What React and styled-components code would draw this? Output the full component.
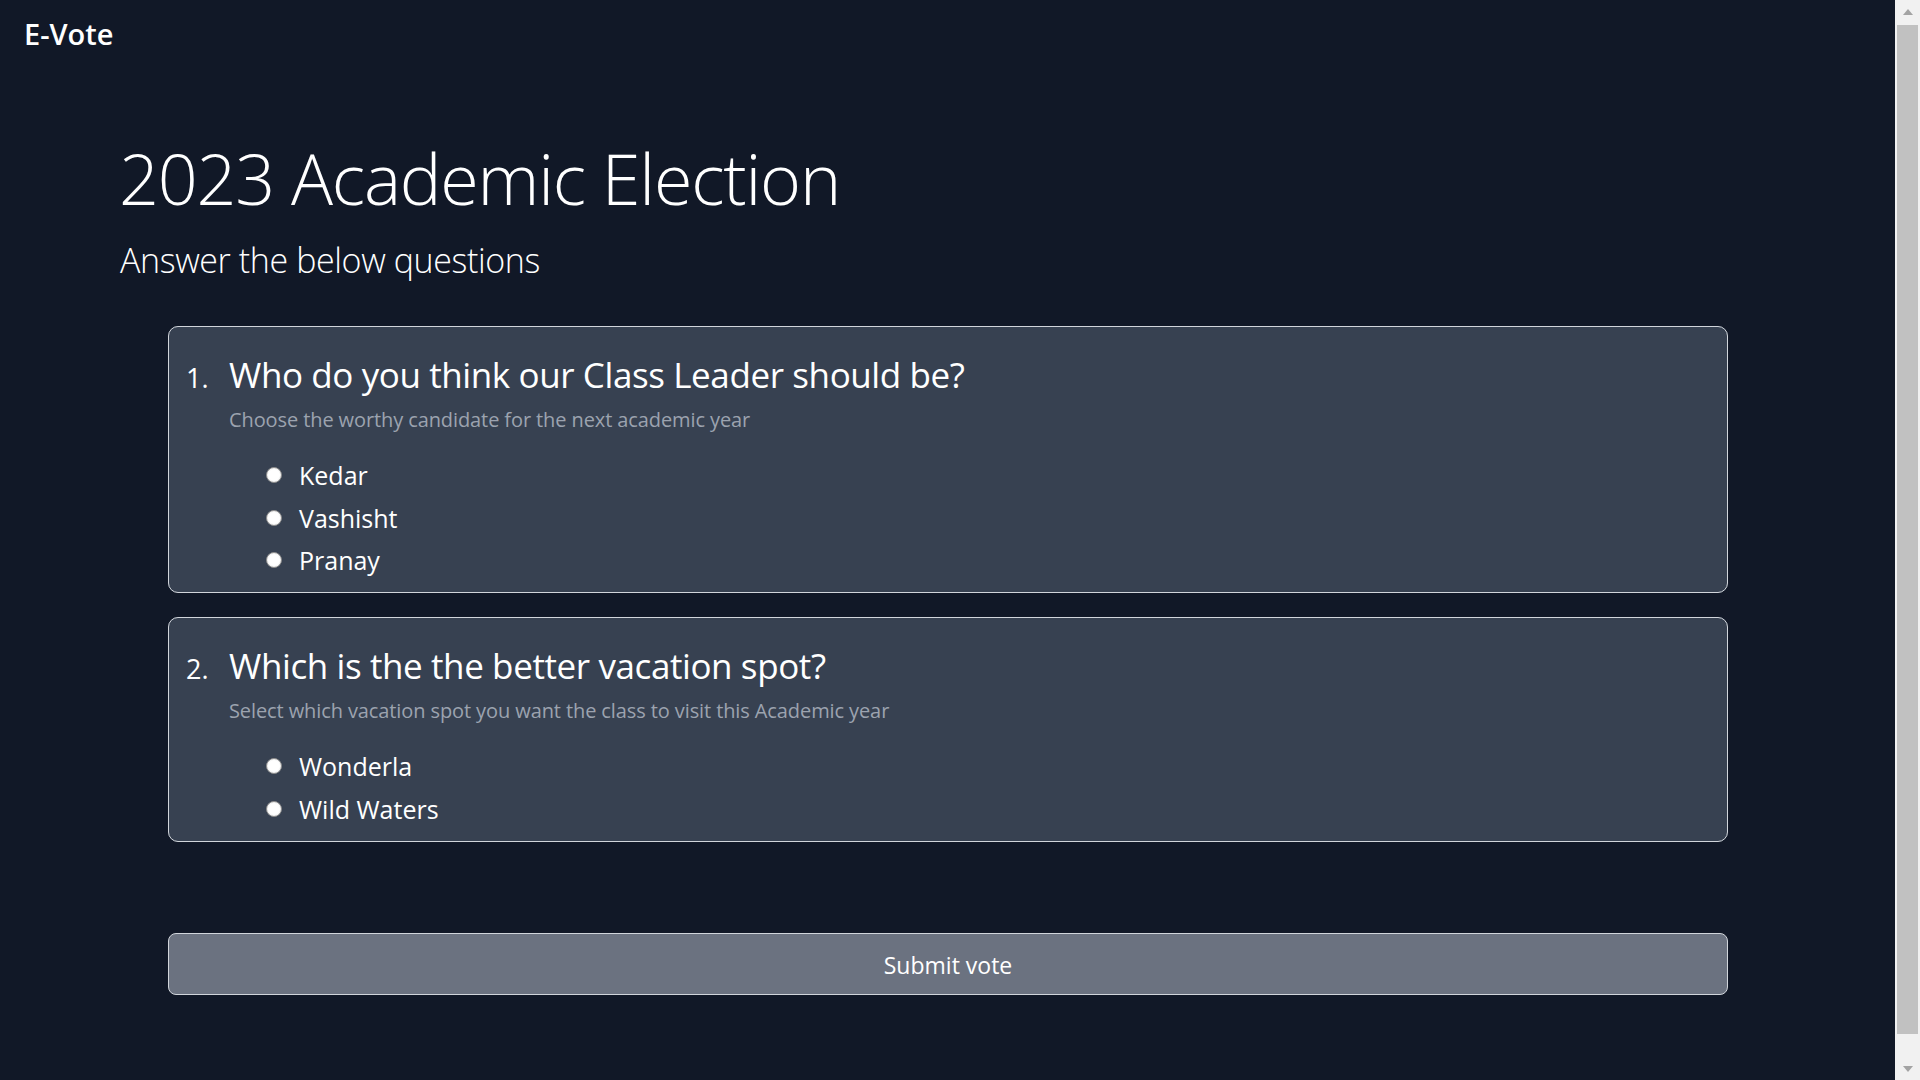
import React from "react";
import styled, { createGlobalStyle } from "styled-components";

const GlobalStyle = createGlobalStyle`
  html, body {
    margin: 0;
    padding: 0;
    overflow: hidden;
    background: #111827;
  }
  body {
    color: #ffffff;
    font-family: "Open Sans", "Noto Sans", sans-serif;
  }
  * { box-sizing: border-box; }
`;

const Window = styled.div`
  display: flex;
  height: 100vh;
`;

const Viewport = styled.main`
  flex: 1;
  min-width: 0;
  display: flex;
  flex-direction: column;
  overflow: hidden;
`;

/* browser scrollbar, drawn */
const ScrollBar = styled.div`
  width: 25px;
  flex: none;
  display: flex;
  flex-direction: column;
  background: #f1f1f1;
`;

const ScrollButton = styled.div`
  height: 25px;
  flex: none;
  display: flex;
  align-items: center;
  justify-content: center;

  &::before {
    content: "";
    width: 0;
    height: 0;
    border-left: 5.5px solid transparent;
    border-right: 5.5px solid transparent;
    ${(p) =>
      p.$down
        ? "border-top: 6px solid #a3a3a3; margin-top: 2px;"
        : "border-bottom: 6px solid #a3a3a3; margin-bottom: 2px;"}
  }
`;

const Track = styled.div`
  flex: 1;
  padding: 0 2px;
`;

const Thumb = styled.div`
  height: 1009px;
  background: #c1c1c1;
`;

const Header = styled.header`
  display: flex;
  align-items: center;
  padding: 16px 24px 0;
  height: 52px;
`;

const Brand = styled.div`
  font-size: 29px;
  font-weight: 600;
  line-height: 36px;
`;

const Hero = styled.section`
  display: flex;
  flex-direction: column;
  padding-left: 119px;
  margin-top: 90px;
`;

const Title = styled.h1`
  margin: 0;
  font-size: 70px;
  font-weight: 300;
  line-height: 72px;
  letter-spacing: -1.2px;
`;

const Subtitle = styled.h2`
  margin: 26px 0 0 1px;
  font-size: 34px;
  font-weight: 300;
  line-height: 40px;
  letter-spacing: -0.4px;
`;

const Form = styled.form`
  display: flex;
  flex-direction: column;
  gap: 24px;
  padding: 0 167px 0 168px;
  margin-top: 46px;
`;

const Card = styled.fieldset`
  margin: 0;
  min-width: 0;
  display: flex;
  flex-direction: column;
  background: #374151;
  border: 1px solid #d1d5db;
  border-radius: 10px;
  padding: 28px 17px 16px;
`;

const QuestionRow = styled.div`
  display: flex;
  align-items: baseline;
`;

const Number = styled.span`
  width: 43px;
  flex: none;
  font-size: 27px;
  line-height: 40px;
`;

const Question = styled.h3`
  margin: 0;
  font-size: 35px;
  font-weight: 400;
  line-height: 40px;
  letter-spacing: -0.4px;
`;

const Hint = styled.p`
  margin: 8px 0 0 43px;
  font-size: 20px;
  line-height: 28px;
  color: #9ca3af;
  letter-spacing: -0.1px;
`;

const Options = styled.div`
  display: flex;
  flex-direction: column;
  gap: 10.5px;
  margin-top: 25px;
  padding-left: 80px;
`;

const Option = styled.label`
  display: flex;
  align-items: center;
  gap: 17px;
  height: 32px;
  font-size: 25px;
  line-height: 32px;
  cursor: pointer;
`;

const Radio = styled.input.attrs({ type: "radio" })`
  appearance: none;
  margin: 0;
  width: 16px;
  height: 16px;
  flex: none;
  border-radius: 50%;
  background: #ffffff;
  border: 1px solid #8a8a8a;
  box-shadow: inset 0 0 0 1px #f3f3f3;

  &:checked {
    border: 4px solid #0075ff;
    box-shadow: none;
  }
`;

const Submit = styled.button`
  margin: 91px 167px 0 168px;
  height: 62px;
  flex: none;
  border: 1px solid #d1d5db;
  border-radius: 8px;
  background: #6b7280;
  color: #ffffff;
  font-family: inherit;
  font-size: 23px;
  line-height: 60px;
  cursor: pointer;
`;

const questions = [
  {
    name: "leader",
    title: "Who do you think our Class Leader should be?",
    hint: "Choose the worthy candidate for the next academic year",
    options: ["Kedar", "Vashisht", "Pranay"],
  },
  {
    name: "vacation",
    title: "Which is the the better vacation spot?",
    hint: "Select which vacation spot you want the class to visit this Academic year",
    options: ["Wonderla", "Wild Waters"],
  },
];

export default function App() {
  return (
    <Window>
      <GlobalStyle />
      <Viewport>
        <Header>
          <Brand>E-Vote</Brand>
        </Header>
        <Hero>
          <Title>2023 Academic Election</Title>
          <Subtitle>Answer the below questions</Subtitle>
        </Hero>
        <Form onSubmit={(e) => e.preventDefault()}>
          {questions.map((q, i) => (
            <Card key={q.name}>
              <QuestionRow>
                <Number>{i + 1}.</Number>
                <Question>{q.title}</Question>
              </QuestionRow>
              <Hint>{q.hint}</Hint>
              <Options>
                {q.options.map((opt) => (
                  <Option key={opt}>
                    <Radio name={q.name} value={opt} />
                    {opt}
                  </Option>
                ))}
              </Options>
            </Card>
          ))}
        </Form>
        <Submit type="button">Submit vote</Submit>
      </Viewport>
      <ScrollBar>
        <ScrollButton />
        <Track>
          <Thumb />
        </Track>
        <ScrollButton $down />
      </ScrollBar>
    </Window>
  );
}
